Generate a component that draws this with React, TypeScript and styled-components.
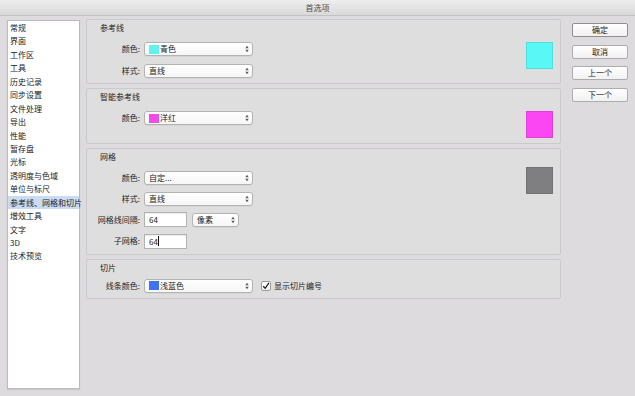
import React from 'react';
import styled, { createGlobalStyle } from 'styled-components';

const GlobalStyle = createGlobalStyle`
  html, body { margin: 0; padding: 0; }
  body {
    background: #dddbdd;
    font-family: "Noto Sans CJK SC", "Noto Sans", sans-serif;
  }
  #root { width: 635px; height: 396px; overflow: hidden; }
`;

const Window = styled.div`
  width: 635px;
  height: 396px;
  display: flex;
  flex-direction: column;
  background: #dddbdd;
  color: #222;
  font-size: 8px;
  font-family: "Noto Sans CJK SC", "Noto Sans", sans-serif;
`;

const TitleBar = styled.div`
  height: 15px;
  flex: none;
  display: flex;
  align-items: center;
  justify-content: center;
  background: linear-gradient(#eeeeee, #d9d9d9);
  border-bottom: 1px solid #c2c2c2;
  font-size: 8px;
  color: #4d4d4d;
`;

const Content = styled.div`
  flex: 1;
  display: flex;
  align-items: flex-start;
  padding: 0 7px;
`;

const Sidebar = styled.ul`
  list-style: none;
  margin: 4px 0 0;
  padding: 0;
  width: 71px;
  height: 367px;
  flex: none;
  background: #fff;
  border: 1px solid #bcbcbc;
  box-shadow: 0 1px 1px rgba(0, 0, 0, 0.08);
`;

const SidebarItem = styled.li<{ $selected?: boolean }>`
  height: 13.45px;
  line-height: 13.45px;
  padding-left: 2px;
  white-space: nowrap;
  font-size: 8px;
  color: #222;
  background: ${(p) => (p.$selected ? '#cadcf3' : 'transparent')};
`;

const Main = styled.div`
  width: 475px;
  flex: none;
  margin: 3px 0 0 6px;
  display: flex;
  flex-direction: column;
  gap: 4px;
`;

const Section = styled.section`
  box-sizing: border-box;
  border: 1px solid #cac9cb;
  border-radius: 2px;
  background: #dfdedf;
  padding: 3px 7px 5px 7px;
`;

const SectionTitle = styled.div<{ $gap?: number }>`
  height: 10px;
  line-height: 10px;
  margin: 0 0 ${(p) => p.$gap ?? 9}px 6px;
  font-size: 8px;
  color: #222;
`;

const SectionBody = styled.div`
  display: flex;
  justify-content: space-between;
  align-items: flex-start;
`;

const Form = styled.div<{ $rowGap: number }>`
  display: grid;
  grid-template-columns: 46px auto;
  column-gap: 4px;
  row-gap: ${(p) => p.$rowGap}px;
  align-items: center;
  justify-content: start;
`;

const Label = styled.div`
  display: flex;
  justify-content: flex-end;
  line-height: 14px;
  white-space: nowrap;
`;

const Field = styled.div`
  display: flex;
  align-items: center;
  gap: 5px;
  min-height: 14px;
`;

const SelectBox = styled.div<{ $w: number }>`
  width: ${(p) => p.$w}px;
  height: 14px;
  box-sizing: border-box;
  border: 1px solid #b3b3b3;
  border-radius: 3px;
  background: linear-gradient(#ffffff, #f6f6f6);
  display: flex;
  align-items: center;
  padding: 0 3px 0 4px;
  gap: 1px;
  box-shadow: 0 1px 0 rgba(0, 0, 0, 0.04);
`;

const Chip = styled.span<{ $color: string }>`
  width: 10px;
  height: 9px;
  flex: none;
  background: ${(p) => p.$color};
`;

const SelectValue = styled.span`
  flex: 1;
  white-space: nowrap;
  line-height: 12px;
`;

const TextInput = styled.div`
  width: 43px;
  height: 15px;
  box-sizing: border-box;
  border: 1px solid #b2b2b2;
  background: #fff;
  padding-left: 4px;
  display: flex;
  align-items: center;
  box-shadow: inset 0 1px 1px rgba(0, 0, 0, 0.08);
`;

const Caret = styled.span`
  width: 1px;
  height: 10px;
  background: #111;
  margin-left: 0.5px;
`;

const CheckRow = styled.label`
  display: flex;
  align-items: center;
  gap: 3px;
  margin-left: 3px;
  white-space: nowrap;
`;

const CheckBox = styled.span`
  width: 10px;
  height: 10px;
  box-sizing: border-box;
  border: 1px solid #9c9c9c;
  border-radius: 2px;
  background: linear-gradient(#ffffff, #f1f1f1);
  display: flex;
  align-items: center;
  justify-content: center;
`;

const Swatch = styled.div<{ $color: string; $offset?: number }>`
  width: 27px;
  height: 27px;
  flex: none;
  box-sizing: border-box;
  margin-top: ${(p) => p.$offset ?? 0}px;
  background: ${(p) => p.$color};
  border: 1px solid rgba(0, 0, 0, 0.1);
`;

const Buttons = styled.div`
  width: 56px;
  flex: none;
  margin: 7px 0 0 11px;
  display: flex;
  flex-direction: column;
  gap: 7.5px;
`;

const Button = styled.button<{ $primary?: boolean }>`
  width: 56px;
  height: 14px;
  padding: 0;
  box-sizing: border-box;
  border: 1px solid ${(p) => (p.$primary ? '#8f8f8f' : '#adadad')};
  border-radius: 2px;
  background: linear-gradient(#ffffff, #f1f1f1);
  font-family: "Noto Sans CJK SC", "Noto Sans", sans-serif;
  font-size: 8px;
  line-height: 12px;
  color: #222;
`;

const Arrows = () => (
  <svg width="4" height="8" viewBox="0 0 4 8">
    <path d="M0.3 3.2 L2 0.8 L3.7 3.2Z M0.3 4.8 L2 7.2 L3.7 4.8Z" fill="#5a5a5a" />
  </svg>
);

const Select = ({ w, value, chip }: { w: number; value: string; chip?: string }) => (
  <SelectBox $w={w}>
    {chip && <Chip $color={chip} />}
    <SelectValue>{value}</SelectValue>
    <Arrows />
  </SelectBox>
);

const navItems = [
  '常规', '界面', '工作区', '工具', '历史记录', '同步设置', '文件处理', '导出', '性能',
  '暂存盘', '光标', '透明度与色域', '单位与标尺', '参考线、网格和切片', '增效工具', '文字', '3D', '技术预览',
];

export default function App() {
  return (
    <>
      <GlobalStyle />
      <Window>
        <TitleBar>首选项</TitleBar>
        <Content>
          <Sidebar>
            {navItems.map((n) => (
              <SidebarItem key={n} $selected={n === '参考线、网格和切片'}>{n}</SidebarItem>
            ))}
          </Sidebar>
          <Main>
            <Section>
              <SectionTitle>参考线</SectionTitle>
              <SectionBody>
                <Form $rowGap={8}>
                  <Label>颜色:</Label>
                  <Field><Select w={109} value="青色" chip="#5ef3ef" /></Field>
                  <Label>样式:</Label>
                  <Field><Select w={109} value="直线" /></Field>
                </Form>
                <Swatch $color="#58f8f6" />
              </SectionBody>
            </Section>
            <Section>
              <SectionTitle>智能参考线</SectionTitle>
              <SectionBody>
                <Form $rowGap={8}>
                  <Label>颜色:</Label>
                  <Field><Select w={109} value="洋红" chip="#f04be9" /></Field>
                </Form>
                <Swatch $color="#fa47f3" />
              </SectionBody>
            </Section>
            <Section>
              <SectionTitle>网格</SectionTitle>
              <SectionBody>
                <Form $rowGap={6.5}>
                  <Label>颜色:</Label>
                  <Field><Select w={109} value="自定..." /></Field>
                  <Label>样式:</Label>
                  <Field><Select w={109} value="直线" /></Field>
                  <Label>网格线间隔:</Label>
                  <Field>
                    <TextInput>64</TextInput>
                    <Select w={47} value="像素" />
                  </Field>
                  <Label>子网格:</Label>
                  <Field>
                    <TextInput>64<Caret /></TextInput>
                  </Field>
                </Form>
                <Swatch $color="#7f7e80" $offset={-4} />
              </SectionBody>
            </Section>
            <Section>
              <SectionTitle $gap={6}>切片</SectionTitle>
              <SectionBody>
                <Form $rowGap={8}>
                  <Label>线条颜色:</Label>
                  <Field>
                    <Select w={109} value="浅蓝色" chip="#3f72ee" />
                    <CheckRow>
                      <CheckBox>
                        <svg width="8" height="8" viewBox="0 0 8 8">
                          <path d="M1.2 4.2 L3.2 6.3 L6.9 0.8" stroke="#222" strokeWidth="1.3" fill="none" />
                        </svg>
                      </CheckBox>
                      显示切片编号
                    </CheckRow>
                  </Field>
                </Form>
              </SectionBody>
            </Section>
          </Main>
          <Buttons>
            <Button $primary>确定</Button>
            <Button>取消</Button>
            <Button>上一个</Button>
            <Button>下一个</Button>
          </Buttons>
        </Content>
      </Window>
    </>
  );
}
